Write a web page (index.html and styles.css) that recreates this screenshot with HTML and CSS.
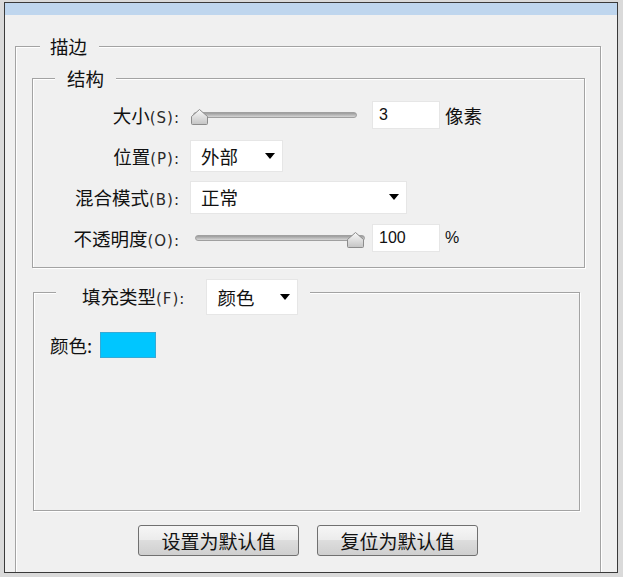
FILE: index.html
```html
<!DOCTYPE html>
<html lang="zh-CN">
<head>
    <meta charset="UTF-8">
    <title>描边</title>
    <link rel="stylesheet" href="styles.css">
</head>
<body>

<div class="window">
    <div class="titlebar"></div>

    <!-- 描边 -->
    <fieldset class="group group-stroke">
        <legend class="legend-stroke">描边</legend>

        <!-- 结构 -->
        <fieldset class="group group-structure">
            <legend class="legend-structure">结构</legend>
            <div class="rows">
                <div class="row">
                    <span class="label">大小<span class="key">(S):</span></span>
                    <div class="slider">
                        <div class="track track-size"></div>
                        <svg class="thumb" style="left: 0px" width="19" height="18" viewBox="0 0 19 18">
                            <defs>
                                <linearGradient id="thumb-a" x1="0" y1="0" x2="0" y2="1">
                                    <stop offset="0" stop-color="#fafafa"/>
                                    <stop offset="1" stop-color="#c4c4c4"/>
                                </linearGradient>
                            </defs>
                            <path d="M1.5 15.5 V8.5 L9.5 1.5 L17.5 8.5 V15.5 Q17.5 16.5 16.5 16.5 H2.5 Q1.5 16.5 1.5 15.5 Z" fill="url(#thumb-a)" stroke="#8c8c8c" stroke-linejoin="round"/>
                        </svg>
                    </div>
                    <input class="field" type="text" value="3">
                    <span class="unit">像素</span>
                </div>
                <div class="row">
                    <span class="label">位置<span class="key">(P):</span></span>
                    <div class="select select-position">
                        <span>外部</span>
                        <span class="arrow"></span>
                    </div>
                </div>
                <div class="row">
                    <span class="label">混合模式<span class="key">(B):</span></span>
                    <div class="select select-blend">
                        <span>正常</span>
                        <span class="arrow"></span>
                    </div>
                </div>
                <div class="row">
                    <span class="label">不透明度<span class="key">(O):</span></span>
                    <div class="slider">
                        <div class="track track-opacity"></div>
                        <svg class="thumb" style="left: 156px" width="19" height="18" viewBox="0 0 19 18">
                            <defs>
                                <linearGradient id="thumb-b" x1="0" y1="0" x2="0" y2="1">
                                    <stop offset="0" stop-color="#fafafa"/>
                                    <stop offset="1" stop-color="#c4c4c4"/>
                                </linearGradient>
                            </defs>
                            <path d="M1.5 15.5 V8.5 L9.5 1.5 L17.5 8.5 V15.5 Q17.5 16.5 16.5 16.5 H2.5 Q1.5 16.5 1.5 15.5 Z" fill="url(#thumb-b)" stroke="#8c8c8c" stroke-linejoin="round"/>
                        </svg>
                    </div>
                    <input class="field" type="text" value="100">
                    <span class="unit unit-percent">%</span>
                </div>
            </div>
        </fieldset>

        <!-- 填充 -->
        <fieldset class="group group-fill">
            <legend class="legend-fill">
                <div class="fill-head">
                    <span class="fill-label">填充类型<span class="key">(F):</span></span>
                    <div class="select select-fill">
                        <span>颜色</span>
                        <span class="arrow"></span>
                    </div>
                </div>
            </legend>
            <div class="fill-body">
                <span class="color-label">颜色:</span>
                <span class="swatch"></span>
            </div>
        </fieldset>

        <div class="buttons">
            <button class="btn">设置为默认值</button>
            <button class="btn">复位为默认值</button>
        </div>
    </fieldset>
</div>

</body>
</html>
```

FILE: styles.css
```css
/* Dialog frame */
body {
    margin: 0;
    background-color: #dadada;
    font-family: "Noto Sans CJK SC", sans-serif;
    color: #111;
}

.window {
    margin: 2px 0 0 4px;
    width: 614px;
    height: 571px;
    box-sizing: border-box;
    border: 1px solid #3a3a3a;
    background-color: #f0f0f0;
    overflow: hidden;
}

.titlebar {
    height: 12px;
    background-color: #bfd6ee;
}

/* Etched group boxes */
.group {
    margin: 0;
    padding: 0;
    min-width: 0;
    box-sizing: border-box;
    border: 1px solid #a3a3a3;
    box-shadow: inset 1px 1px 0 #fff, 1px 1px 0 #fff;
}

.group legend {
    background-color: #f0f0f0;
    font-size: 18.5px;
    line-height: 22px;
}

.group-stroke {
    margin: 20px 0 0 10px;
    width: 586px;
    padding-bottom: 40px;
}

.legend-stroke {
    margin-left: 24px;
    padding: 0 12px 0 10px;
}

.group-structure {
    margin: 10px 0 0 16px;
    width: 553px;
    padding: 9px 0 12px;
}

.legend-structure {
    margin-left: 22px;
    padding: 0 12px;
}

.group-fill {
    margin: 1px 0 0 17px;
    width: 547px;
}

.legend-fill {
    margin-left: 22px;
    padding: 10px 12px 0 26px;
}

/* Rows */
.rows {
    display: flex;
    flex-direction: column;
    gap: 7px;
}

.row {
    display: flex;
    align-items: center;
    height: 34px;
}

.label {
    width: 147px;
    margin-right: 10px;
    text-align: right;
    font-size: 18.5px;
    white-space: nowrap;
}

.key {
    font-family: "DejaVu Sans", sans-serif;
    font-size: 15px;
    letter-spacing: 1px;
    color: #2a2a2a;
}

/* Slider */
.slider {
    position: relative;
    width: 180px;
    height: 20px;
    margin-right: 2px;
}

.track {
    position: absolute;
    top: 7px;
    height: 6px;
    box-sizing: border-box;
    border: 1px solid #a0a0a0;
    border-radius: 3px;
    background: linear-gradient(#9c9c9c, #d6d6d6);
}

.track-size {
    left: 3px;
    right: 13px;
}

.track-opacity {
    left: 5px;
    right: 5px;
}

.thumb {
    position: absolute;
    top: 3px;
}

/* Inputs */
.field {
    width: 68px;
    height: 28px;
    box-sizing: border-box;
    margin: 0;
    padding: 0 0 0 6px;
    border: 1px solid #e6e6e6;
    background-color: #fff;
    font-family: "Liberation Sans", sans-serif;
    font-size: 16px;
    color: #111;
}

.unit {
    margin-left: 5px;
    font-size: 18.5px;
}

.unit-percent {
    font-family: "Liberation Sans", sans-serif;
    font-size: 16px;
}

.select {
    display: flex;
    align-items: center;
    justify-content: space-between;
    height: 32px;
    box-sizing: border-box;
    padding: 0 7px 0 10px;
    border: 1px solid #e6e6e6;
    background-color: #fff;
    font-size: 18.5px;
}

.select-position {
    width: 93px;
}

.select-blend {
    width: 217px;
    height: 33px;
}

.select-fill {
    width: 92px;
    height: 36px;
}

.arrow {
    width: 0;
    height: 0;
    border-left: 5.5px solid transparent;
    border-right: 5.5px solid transparent;
    border-top: 6px solid #000;
}

/* Fill */
.fill-head {
    display: flex;
    align-items: center;
    gap: 21px;
}

.fill-label {
    font-size: 18.5px;
    white-space: nowrap;
}

.fill-body {
    display: flex;
    align-items: flex-start;
    height: 195px;
    box-sizing: border-box;
    padding: 17px 0 0 16px;
}

.color-label {
    font-size: 18.5px;
    line-height: 26px;
    margin-right: 8px;
}

.swatch {
    width: 56px;
    height: 26px;
    box-sizing: border-box;
    border: 1px solid #35aad6;
    background-color: #00c6ff;
}

/* Buttons */
.buttons {
    display: flex;
    justify-content: center;
    gap: 18px;
    margin-top: 14px;
}

.btn {
    width: 161px;
    height: 31px;
    padding: 0;
    border: 1px solid #707070;
    border-radius: 3px;
    background: linear-gradient(#f6f6f6, #ebebeb 50%, #dddddd 50%, #cfcfcf);
    font-family: "Noto Sans CJK SC", sans-serif;
    font-size: 19px;
    color: #111;
}
```
